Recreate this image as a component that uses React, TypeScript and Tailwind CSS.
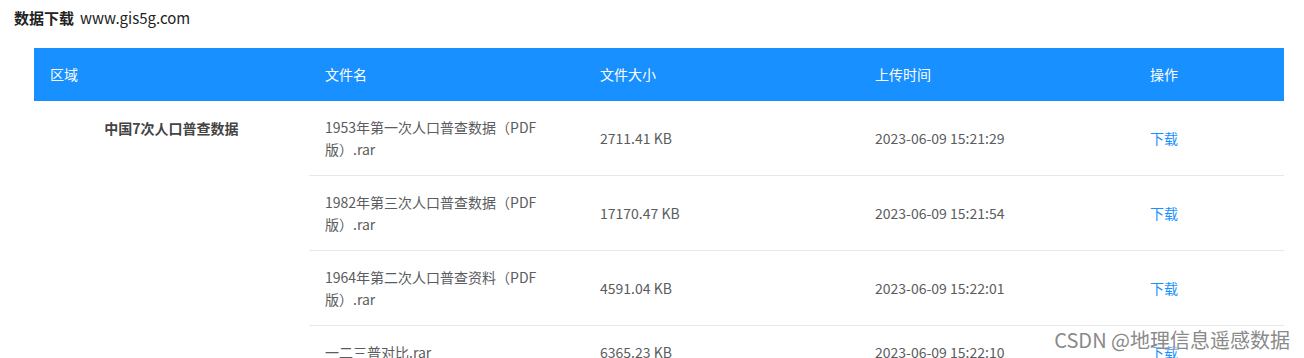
import React from "react";

const rows = [
  { name: "1953年第一次人口普查数据（PDF版）.rar", size: "2711.41 KB", time: "2023-06-09 15:21:29" },
  { name: "1982年第三次人口普查数据（PDF版）.rar", size: "17170.47 KB", time: "2023-06-09 15:21:54" },
  { name: "1964年第二次人口普查资料（PDF版）.rar", size: "4591.04 KB", time: "2023-06-09 15:22:01" },
  { name: "一二三普对比.rar", size: "6365.23 KB", time: "2023-06-09 15:22:10" },
];

export default function App() {
  const font = { fontFamily: '"Noto Sans CJK SC", "Noto Sans", sans-serif' };
  return (
    <div className="relative w-[1304px] h-[358px] overflow-hidden bg-white" style={font}>
      <div className="pl-[14px] pt-[8px] flex items-baseline h-[20px] leading-[20px] text-[#222]">
        <span className="font-bold text-[15px]">数据下载</span>
        <span className="ml-[6px] text-[15px]">www.gis5g.com</span>
      </div>
      <div className="ml-[34px] mt-[28px] w-[1250px]">
        <table className="w-[1250px] border-collapse table-fixed text-[14px]">
          <colgroup>
            <col className="w-[275px]" />
            <col className="w-[275px]" />
            <col className="w-[275px]" />
            <col className="w-[275px]" />
            <col className="w-[150px]" />
          </colgroup>
          <thead>
            <tr className="bg-[#1890ff] text-white h-[53px]">
              <th className="text-left font-normal px-4">区域</th>
              <th className="text-left font-normal px-4">文件名</th>
              <th className="text-left font-normal px-4">文件大小</th>
              <th className="text-left font-normal px-4">上传时间</th>
              <th className="text-left font-normal px-4">操作</th>
            </tr>
          </thead>
          <tbody className="text-[#5a5c60] leading-[22px]">
            {rows.map((r, i) => (
              <tr key={i}>
                {i === 0 && (
                  <td rowSpan={rows.length} className="align-top text-center pt-[16px] px-4 font-bold text-[#444]">
                    中国7次人口普查数据
                  </td>
                )}
                <td className="px-4 py-[15px] border-b border-[#e8e8e8] align-middle">
                  <div className="w-[222px]">{r.name}</div>
                </td>
                <td className="px-4 py-[15px] border-b border-[#e8e8e8] align-middle">{r.size}</td>
                <td className="px-4 py-[15px] border-b border-[#e8e8e8] align-middle">{r.time}</td>
                <td className="px-4 py-[15px] border-b border-[#e8e8e8] align-middle text-[#1890ff]">下载</td>
              </tr>
            ))}
          </tbody>
        </table>
      </div>
      <div
        className="absolute right-[14px] top-[326px] text-[20px] leading-[28px] text-[#8a8a8a]"
        style={{ textShadow: "0 0 2px #fff, 0 0 2px #fff" }}
      >
        CSDN @地理信息遥感数据
      </div>
    </div>
  );
}
